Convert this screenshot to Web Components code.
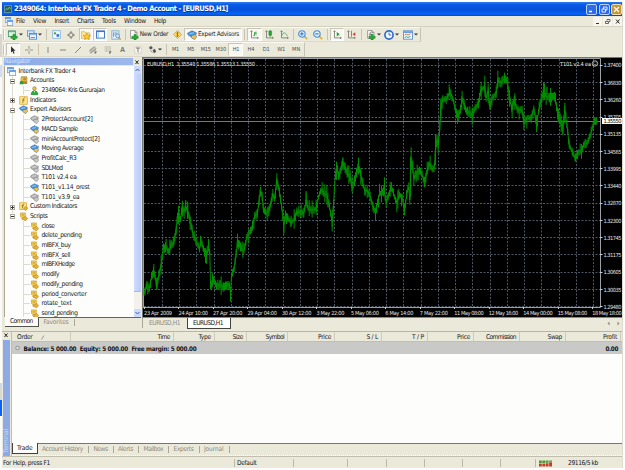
<!DOCTYPE html>
<html lang="en">
<head>
<meta charset="utf-8">
<title>Interbank FX Trader 4</title>
<style>
    body {
        margin: 0;
        width: 625px;
        height: 470px;
        overflow: hidden;
        background: #fdfdfd;
        font: 6.6px/9px "DejaVu Sans Condensed", "DejaVu Sans", sans-serif;
        color: #181818;
    }
</style>
</head>
<body>
<trader-app></trader-app>

<script>
// Small SVG drawings, all on a 12x12 grid
const chartAxes = '<path d="M2 1v9.500h9M.8 2.500L2 1l1.200 1.500M9.500 9.300l1.500 1.200-1.500 1.200" fill="none" stroke="#6c6c66"/>';
const sheet = '<path d="M2 .5h5l2.500 2.500v7H2z" fill="#fff" stroke="#888"/><path d="M7 .5V3h2.500" fill="none" stroke="#888"/>';
const plus = '<path d="M6 5h2.500v2.500H11V10H8.500v2H6v-2H3.500V7.500H6z" fill="#25ae30" stroke="#087519" stroke-width=".5"/>';
const scroll = '<path d="M2 1.200h6.500v6.500H4l-2-2z" fill="#f7cf55" stroke="#b98b1c" stroke-width=".7"/><path d="M3.500 8.500L9 6l2.500 2.500L9 11.500 4.500 10z" fill="#eab330" stroke="#a87617" stroke-width=".7"/><path d="M3.500 3.200h3.500M3.500 5h3.500" stroke="#c4952a" stroke-width=".8"/>';
const hat = (a, b, c) => `<path d="M.5 4L6 1l5.500 2.500-2 3.500L5 8 2 6.500z" fill="${a}" stroke="${b}" stroke-width=".7"/><path d="M5 6.500l5.500-1 1 3L9 11.500 5.500 9.500z" fill="${c}" stroke="${b}" stroke-width=".6"/><path d="M3 4.500l5-1" stroke="#fff" stroke-opacity=".6"/>`;

const ICONS = {
    app: '<rect x=".5" y="1" width="11" height="10" fill="#285d60" stroke="#8ca99e"/><path d="M2 8l2-3 2 2 2-4 2 3" fill="none" stroke="#8cdf91"/>',
    windows: '<rect x=".5" y=".5" width="8" height="7" fill="#d9ebff" stroke="#6f9ee0"/><path d="M.5 1.500h8" stroke="#5c92e4" stroke-width="2"/><rect x="3.500" y="4.500" width="8" height="7" fill="#f3f9ff" stroke="#6f9ee0"/><path d="M3.500 5.500h8" stroke="#5c92e4" stroke-width="2"/>',
    newChart: '<rect x=".5" y="1" width="8.500" height="7" fill="#dcf3e3" stroke="#4b9868"/><path d="M.5 2h8.500" stroke="#4b9868"/>' + plus,
    profiles: '<rect x=".5" y="1" width="8" height="6.500" fill="#d8eafd" stroke="#5990d5"/><rect x="3" y="4" width="8.500" height="7" fill="#eaf4ff" stroke="#4781cc"/><path d="M3 5h8.500M4.500 9h5" stroke="#4781cc"/>',
    market: '<rect x="1" y="1" width="10" height="10" fill="#f5fbff" stroke="#76a8d9"/><path d="M2.500 3.200h3v2.500h-3z" fill="#2fa444"/><path d="M6 5.500h3.500v3.500H6z" fill="#316fd0"/>',
    target: '<circle cx="6" cy="6" r="3.500" fill="none" stroke="#77756d" stroke-width="1.200"/><path d="M6 0v4.500M6 7.500V12M0 6h4.500M7.500 6H12" stroke="#77756d" stroke-width="1.300"/>',
    navigator: '<path d="M.5 2h4l1 1.500h5V10H.5z" fill="#fbe795" stroke="#c9a33b" stroke-width=".7"/><path d="M7 3.500l1.400 2.700 3 .4-2.200 2 .6 3-2.800-1.400-2.700 1.400.5-3-2.200-2 3-.4z" fill="#ffc933" stroke="#c98a12" stroke-width=".7"/>',
    terminal: '<rect x=".7" y="1.200" width="10.600" height="9.600" fill="#fff" stroke="#3c77c8" stroke-width="1.300"/><path d="M1 2h10" stroke="#3c77c8" stroke-width="1.500"/><path d="M3 3v8" stroke="#9cc3ef" stroke-width="1.500"/>',
    tester: '<rect x="1" y="1" width="8.500" height="10" fill="#e0eefa" stroke="#80a7cd"/><path d="M3 3v5M5 2.500v4M7 3v3" stroke="#668fb9"/><circle cx="8" cy="7" r="2.300" fill="#cde8fc" stroke="#678eb9"/><path d="M9.500 9l2 2.500" stroke="#c29a48" stroke-width="1.500"/>',
    order: sheet + plus,
    coin: '<path d="M6 .7L11.300 6 6 11.300.7 6z" fill="#ffda63" stroke="#d59b21"/><path d="M7.500 4c-3-1.500-3.500 1-1.500 1.800S7 9 4.300 7.800M6 2.800v6.400" fill="none" stroke="#92600e" stroke-width=".9"/>',
    expert: hat('#4c9ae2', '#2860a4', '#f1c04a'),
    expertOff: hat('#b3b3b3', '#767676', '#c8c8c8'),
    bars: chartAxes + '<path d="M6 3v5M6 4h2M8 2v5M4.500 7.500H6" stroke="#159127" fill="none"/>',
    candles: chartAxes + '<path d="M7 0v9" stroke="#0e7620"/><path d="M5.200 1.500h3.600V7H5.200z" fill="#20ad38" stroke="#0e7620" stroke-width=".6"/>',
    line: chartAxes + '<path d="M3 7c2-6 4-3 7 1" fill="none" stroke="#4f9568"/>',
    zoomIn: '<path d="M7 7l4 4" stroke="#deb23b" stroke-width="2.200"/><circle cx="4.700" cy="4.700" r="3.900" fill="#dff1ff" stroke="#438ad6" stroke-width="1.300"/><path d="M2.700 4.700h4M4.700 2.700v4" stroke="#2b65b3" stroke-width="1.200"/>',
    zoomOut: '<path d="M7 7l4 4" stroke="#deb23b" stroke-width="2.200"/><circle cx="4.700" cy="4.700" r="3.900" fill="#dff1ff" stroke="#438ad6" stroke-width="1.300"/><path d="M2.700 4.700h4" stroke="#2b65b3" stroke-width="1.200"/>',
    autoScroll: chartAxes + '<path d="M5 2.500L9 5.500 5 8.500z" fill="#1da633"/>',
    shift: chartAxes + '<path d="M6 1v8" stroke="#666"/><path d="M11 3L7.500 5.500 11 8z" fill="#d33b24"/>',
    indicators: sheet + '<path d="M6.500 2.500c-2-.5-1.500 2-2 5M3.500 5h3" fill="none" stroke="#777"/>' + plus,
    clock: '<circle cx="6" cy="6" r="4.900" fill="#f1f8ff" stroke="#2f6ccc" stroke-width="2"/><path d="M6 3v3h2.500" fill="none" stroke="#2b5aa8"/>',
    template: '<rect x=".5" y="1" width="11" height="10" fill="#eff7ff" stroke="#5089cc"/><path d="M.5 2.500h11" stroke="#5f98da" stroke-width="2"/><path d="M2 6l2-1 2 1 3-1.500" fill="none" stroke="#d95140"/><path d="M2 9l2-1 2 1 3-1.500" fill="none" stroke="#2ba03b"/>',
    cursor: '<path d="M3 .5v9.300l2.200-2L6.800 11.500l1.600-.8-1.600-3.400h3z" fill="#303030"/>',
    cross: '<path d="M6 0v4.800M6 7.200V12M0 6h4.800M7.200 6H12" stroke="#84827a" stroke-width="1.200"/>',
    vline: '<path d="M6 1.500v9" stroke="#77756e" stroke-width="1.200"/>',
    hline: '<path d="M1.500 6h9" stroke="#77756e" stroke-width="1.300"/>',
    trend: '<path d="M1.500 10.500l9-9" stroke="#77756e" stroke-width="1.300"/>',
    channel: '<path d="M0 8l8-7M2 11l9-7M3 4v7M6 2v7M9 1v6" fill="none" stroke="#77756e"/><path d="M9 8v4M9 8.500h2.500M9 10h2" stroke="#555" fill="none"/>',
    fibo: '<path d="M1 1.500h10M1 4.500h10M1 7.500h10" stroke="#8d8b81" stroke-dasharray="1.500 .5"/><path d="M8.500 8v4M8.500 8.500h2.500M8.500 10h2" stroke="#555" fill="none"/>',
    label: '<rect x="1" y="1" width="10" height="10" fill="#f8f6ee" stroke="#aaa89c" stroke-dasharray="1 1"/><path d="M3 3h6M6 3v6.500" stroke="#666" stroke-width="1.300"/>',
    arrows: '<path d="M1 4l3-3 2.500 3L4 6z" fill="#555"/><path d="M6 7l3-2 2 4-3 2z" fill="#555"/><path d="M3 7l3 3" stroke="#777"/>',
    accounts: '<path d="M3 1h7.500v9H3z" fill="#e8bd43" stroke="#8d7022" stroke-width=".8"/><circle cx="7.500" cy="4" r="2" fill="#c48a35"/><path d="M1 11V8l2-2 3 1v4z" fill="#24a034"/><circle cx="3" cy="4.800" r="1.600" fill="#e6c154"/><path d="M5 10c0-4 6-4 6 0z" fill="#a87f25"/>',
    user: '<path d="M1.500 11.500c0-7 9-7 9 0z" fill="#27af36" stroke="#0b751a" stroke-width=".7"/><circle cx="6" cy="3.300" r="2.400" fill="#e7bf51" stroke="#8b6b1d" stroke-width=".7"/><path d="M5 7l1 2 1-2" fill="#fff"/>',
    indicator: '<rect x="1" y="1" width="10" height="10" fill="#ffe588" stroke="#d3a533"/><path d="M8 2.500c-2.500-.5-2 2-3 7M4 5.500h3.500" fill="none" stroke="#8a650e"/>',
    custom: '<rect x="1" y="1" width="9" height="9" fill="#ffe588" stroke="#d3a533"/><path d="M7 2.500c-2-.5-2 2-2.500 6M3.500 5h3" fill="none" stroke="#8a650e"/><path d="M6 8l3-2 3 2-3 3.500z" fill="#efb12c" stroke="#a97a14" stroke-width=".6"/>',
    script: scroll,
    signal: '<path d="M0 1h2.600v5H0zM3.100 1h2.600v5H3.100zM6.200 1h2.600v3.500H6.200zM9.300 1h2.700v2H9.300z" fill="#4d9a32"/><path d="M0 7h2.600v4H0zM3.100 7h2.600v4H3.100zM6.200 5.500h2.600V11H6.200zM9.300 4h2.700v7H9.300z" fill="#c2402b"/>'
};

class PixelIcon extends HTMLElement {
    connectedCallback() {
        const shadow = this.attachShadow({ mode: 'open' });
        const w = this.getAttribute('w') || 10;
        const h = this.getAttribute('h') || w;
        shadow.innerHTML = `
            <style>:host { display: block; flex: none; } svg { display: block; }</style>
            <svg width="${w}" height="${h}" viewBox="0 0 12 12" preserveAspectRatio="none">${ICONS[this.getAttribute('name')]}</svg>
        `;
    }
}
customElements.define('pixel-icon', PixelIcon);

// Label that spreads its letters over the given width
class FitText extends HTMLElement {
    connectedCallback() {
        const shadow = this.attachShadow({ mode: 'open' });
        shadow.innerHTML = `
            <style>
                :host { display: block; flex: none; }
                span { display: block; width: max-content; white-space: pre; }
            </style>
            <span><slot></slot></span>
        `;
        const w = parseFloat(this.getAttribute('w'));
        const span = shadow.querySelector('span');
        const box = span.getBoundingClientRect();
        const natural = this.hasAttribute('vertical') ? box.height : box.width;
        const count = this.textContent.length;
        if (!this.hasAttribute('vertical')) this.style.width = w + 'px';
        span.style.letterSpacing = ((w - natural) / count) + 'px';
    }
}
customElements.define('fit-text', FitText);

class TitleBar extends HTMLElement {
    connectedCallback() {
        this.attachShadow({ mode: 'open' }).innerHTML = `
            <style>
                :host {
                    display: flex; align-items: center; height: 14px; box-sizing: border-box;
                    padding: 0 0 0 2px; color: #fff;
                    background: linear-gradient(#2f7fee, #0a5ae6 18%, #0450db 55%, #0665f8 85%, #0448c6);
                    font: bold 7.500px/12px "DejaVu Sans Condensed", "DejaVu Sans", sans-serif;
                }
                fit-text { margin-left: 2px; text-shadow: .5px .5px #08368e; }
                .buttons { display: flex; gap: 1.500px; margin-left: auto; }
                svg { display: block; box-sizing: border-box; border: 1px solid #b9d2ff; border-radius: 2px; background: #2e6be6; }
                .close { background: #c89430; border-color: #f0dfb5; }
            </style>
            <pixel-icon name="app" w="8"></pixel-icon>
            <fit-text w="214">2349064: Interbank FX Trader 4 - Demo Account - [EURUSD,H1]</fit-text>
            <div class="buttons">
                <svg width="11" height="11" viewBox="0 0 9 9"><path d="M2 6.500h3" stroke="#fff" stroke-width="1.500"/></svg>
                <svg width="11" height="11" viewBox="0 0 9 9"><path d="M3.500 4V2h3.500v3H5.500M2 4h3.500v3H2z" fill="none" stroke="#dfe9ff"/></svg>
                <svg class="close" width="11" height="11" viewBox="0 0 9 9"><path d="M2 2l5 5M7 2L2 7" stroke="#fff" stroke-width="1.300"/></svg>
            </div>
        `;
    }
}
customElements.define('title-bar', TitleBar);

class MenuBar extends HTMLElement {
    connectedCallback() {
        const items = [['File', 9, 8], ['View', 13, 8.5], ['Insert', 14.5, 8], ['Charts', 17, 8], ['Tools', 14, 8], ['Window', 22, 8], ['Help', 12, 0]];
        this.attachShadow({ mode: 'open' }).innerHTML = `
            <style>
                :host { display: flex; align-items: center; height: 11px; box-sizing: border-box; padding-left: 3px; border-bottom: 1px solid #d5d1c0; }
                pixel-icon { margin-right: 3px; }
                .mdi { margin-left: auto; display: flex; gap: 1px; }
                .mdi svg { display: block; background: #f7f5ec; }
            </style>
            <pixel-icon name="windows" w="8" h="9"></pixel-icon>
            ${items.map(([t, w, gap]) => `<fit-text w="${w}" style="margin-right:${gap}px">${t}</fit-text>`).join('')}
            <div class="mdi">
                <svg width="9" height="9"><path d="M3 6.500h3" stroke="#333"/></svg>
                <svg width="9" height="9"><path d="M4 3.500V2.500h3v2H6M2.500 4.500h3v2h-3z" fill="none" stroke="#444" stroke-width=".8"/></svg>
                <svg width="9" height="9"><path d="M3 2.500l3.500 4M6.500 2.500L3 6.500" stroke="#222"/></svg>
            </div>
        `;
    }
}
customElements.define('menu-bar', MenuBar);

// Toolbar cell: optional icon and caption, with attributes for the pressed state and the drop-down arrow
class ToolButton extends HTMLElement {
    connectedCallback() {
        const icon = this.getAttribute('icon');
        const size = this.getAttribute('size') || 10;
        this.attachShadow({ mode: 'open' }).innerHTML = `
            <style>
                :host { display: flex; flex: none; align-items: center; justify-content: center; height: 13px; box-sizing: border-box; gap: 1px; }
                :host([pressed]) { background: #f8f7f1; border: 1px solid; border-color: #c9c5b6 #fff #fff #c9c5b6; }
            </style>
            ${icon ? `<pixel-icon name="${icon}" w="${size}"></pixel-icon>` : ''}
            <slot></slot>
            ${this.hasAttribute('drop') ? '<svg width="4" height="3" style="flex:none"><path d="M0 .5h4L2 2.500z" fill="#333"/></svg>' : ''}
        `;
        this.style.width = this.getAttribute('w') + 'px';
    }
}
customElements.define('tool-button', ToolButton);

class ToolBar extends HTMLElement {
    connectedCallback() {
        this.attachShadow({ mode: 'open' }).innerHTML = `
            <style>
                :host { display: flex; align-items: center; height: 15px; box-sizing: border-box; width: max-content; border-right: 1px solid #c7c3b3; border-bottom: 1px solid #dedacb; border-top: 1px solid #f9f8f1; }
                .grip { width: 2px; height: 10px; margin: 0 1px; box-sizing: border-box; background: #c9c5b6; border-right: 1px solid #fff; }
                ::slotted(hr) { flex: none; width: 1px; height: 11px; margin: 0 2px; border: 0; background: #c9c3b0; }
            </style>
            <div class="grip"></div>
            <slot></slot>
        `;
    }
}
customElements.define('tool-bar', ToolBar);

class NavigatorTree extends HTMLElement {
    connectedCallback() {
        const rows = [
            [0, 'windows', 'Interbank FX Trader 4', 57],
            [1, 'accounts', 'Accounts', 24, '-'],
            [2, 'user', '2349064: Kris Gururajan', 63],
            [1, 'indicator', 'Indicators', 26, '+'],
            [1, 'expert', 'Expert Advisors', 41, '-'],
            [2, 'expertOff', '2ProtectAccount[2]', 51],
            [2, 'expert', 'MACD Sample', 36],
            [2, 'expertOff', 'miniAccountProtect[2]', 58],
            [2, 'expert', 'Moving Average', 42],
            [2, 'expertOff', 'ProfitCalc_R3', 35],
            [2, 'expertOff', 'SDLMod', 21],
            [2, 'expertOff', 'T101 v2.4 ea', 35],
            [2, 'expert', 'T101_v1.14_orest', 48],
            [2, 'expertOff', 'T101_v3.9_ea', 38],
            [1, 'custom', 'Custom Indicators', 47, '+'],
            [1, 'script', 'Scripts', 17.5, '-'],
            [2, 'script', 'close', 13],
            [2, 'script', 'delete_pending', 40],
            [2, 'script', 'mIBFX_buy', 29],
            [2, 'script', 'mIBFX_sell', 28.5],
            [2, 'script', 'mIBFXHedge', 33],
            [2, 'script', 'modify', 17.5],
            [2, 'script', 'modify_pending', 41],
            [2, 'script', 'period_converter', 45],
            [2, 'script', 'rotate_text', 30],
            [2, 'script', 'send_pending', 36]
        ];
        const left = [2, 13.5, 25];
        const html = rows.map(([level, icon, text, w, box]) => `
            <div class="row l${level}" style="padding-left:${left[level]}px">
                ${box ? `<i>${box === '+' ? '<b></b>' : ''}</i>` : ''}
                <pixel-icon name="${icon}" w="9"></pixel-icon>
                <fit-text w="${w}">${text}</fit-text>
            </div>`).join('');
        this.attachShadow({ mode: 'open' }).innerHTML = `
            <style>
                :host { display: flex; height: 251px; background: #fdfefc; border: solid #aaa797; border-width: 0 0 0 1px; box-sizing: border-box; overflow: hidden; }
                .list { flex: 1; overflow: hidden; position: relative; padding-top: .4px;
                    background: linear-gradient(#dedbd0, #dedbd0) 7px 8px / 1px 139px no-repeat; }
                .row { display: flex; align-items: center; height: 9.700px; gap: 2.500px; position: relative; }
                .l2 { background: linear-gradient(#dedbd0, #dedbd0) 18px 0 / 1px 100% no-repeat, linear-gradient(#dedbd0, #dedbd0) 18px 50% / 7px 1px no-repeat; }
                i { position: absolute; left: 4.500px; top: 2.500px; width: 5px; height: 5px; box-sizing: border-box; border: 1px solid #a9a799;
                    background: linear-gradient(#333, #333) center / 3px 1px no-repeat #fff; }
                b { position: absolute; left: 1px; top: 0; width: 1px; height: 3px; background: #333; }
                .scroll { display: flex; flex-direction: column; width: 7px; background: #f3f1ea; }
                .scroll svg { display: block; background: #cbdafd; }
                .thumb { height: 218px; background: linear-gradient(90deg, #cfdcfe, #b7cbf8); border-bottom: 1px solid #a4b9ed; box-sizing: border-box; }
                .gap { flex: 1; }
            </style>
            <div class="list">${html}</div>
            <div class="scroll">
                <svg width="7" height="8"><path d="M1.500 5l2-2 2 2" fill="none" stroke="#3f5b94"/></svg>
                <div class="thumb"></div>
                <div class="gap"></div>
                <svg width="7" height="8"><path d="M1.500 3l2 2 2-2" fill="none" stroke="#3f5b94"/></svg>
            </div>
        `;
    }
}
customElements.define('navigator-tree', NavigatorTree);

class NavigatorPanel extends HTMLElement {
    connectedCallback() {
        this.attachShadow({ mode: 'open' }).innerHTML = `
            <style>
                :host { display: block; width: 140px; flex: none; padding: 0 1.500px 0 2px; box-sizing: border-box; }
                .head { display: flex; justify-content: space-between; height: 9px; align-items: center; }
                .bar { flex: 1; height: 7px; background: linear-gradient(90deg, #8caae6, #9db8ec); color: #d7e4fd; display: flex; align-items: center; }
                .head svg { display: block; }
                .tabs { display: flex; height: 11px; align-items: flex-start; color: #8d8b80; border-top: 1px solid #66645d; margin-left: 1px; }
                .on { height: 9px; background: #fdfdfb; border: solid #55534d; border-width: 0 1px 1px 0; padding: 0 5px 0 5px; color: #222; margin-top: -1px; margin-right: 5px; }
                .sep { width: 1px; height: 7px; background: #aaa799; margin: 1px 0 0 5px; }
            </style>
            <div class="head">
                <div class="bar"><fit-text w="26">Navigator</fit-text></div>
                <svg width="8" height="8"><path d="M2.500 2.500l3 3.500M5.500 2.500l-3 3.500" stroke="#222"/></svg>
            </div>
            <navigator-tree></navigator-tree>
            <div class="tabs">
                <div class="on"><fit-text w="22.5">Common</fit-text></div>
                <fit-text w="25">Favorites</fit-text>
                <div class="sep"></div>
            </div>
        `;
    }
}
customElements.define('navigator-panel', NavigatorPanel);

class PriceChart extends HTMLElement {
    // Shape of the hourly series, in thirds of a pixel; y is counted from the middle of the plot
    static SERIES = [
        14,310, 22,285, 30,295, 36,262, 42,240, 47,262, 52,290, 58,255, 65,225, 72,168, 80,172, 88,188, 95,165, 103,160,
        110,120, 114,80, 118,75, 123,90, 128,50, 134,65, 138,48, 145,65, 152,90, 160,130, 172,158, 180,175, 185,155, 192,178,
        200,200, 207,175, 211,190, 213,285, 222,272, 232,285, 242,285, 252,292, 262,285, 270,285, 273,310, 276,258, 284,235,
        294,160, 304,172, 313,185, 322,140, 333,125, 340,105, 347,75, 354,70, 359,30, 363,0, 368,20, 372,62, 380,70,
        388,62, 395,35, 400,10, 405,25, 412,-30, 420,5, 427,55, 433,105, 438,75, 445,85, 455,100, 465,85, 472,68, 485,65,
        493,70, 500,30, 506,58, 518,60, 531,55, 537,20, 545,-2, 553,10, 562,15, 570,50, 578,95, 582,50, 585,-10, 589,-55,
        594,-60, 598,-40, 604,-60, 610,-85, 617,-65, 625,-48, 632,-38, 638,-5, 645,-30, 652,-50, 657,-75, 664,-45,
        670,-18, 677,5, 683,0, 692,20, 700,48, 708,68, 714,40, 720,10, 726,15, 734,0, 740,38, 747,15, 756,-10, 765,20,
        772,38, 780,15, 788,20, 795,65, 802,10, 808,-8, 811,30, 813,-60, 817,-85, 823,-35, 830,-48, 840,-60, 848,-45,
        856,-20, 863,-60, 869,-80, 878,-62, 884,-65, 888,-115, 892,-150, 897,-140, 901,-190, 905,-255, 910,-272, 920,-270,
        931,-295, 940,-275, 948,-240, 956,-222, 963,-240, 968,-275, 975,-250, 985,-235, 998,-225, 1010,-250, 1017,-260,
        1024,-300, 1036,-310, 1040,-275, 1046,-298, 1051,-250, 1060,-278, 1070,-290, 1075,-330, 1084,-322, 1095,-335,
        1102,-328, 1110,-285, 1117,-240, 1124,-270, 1133,-240, 1148,-240, 1153,-205, 1165,-215, 1175,-215, 1183,-245,
        1191,-200, 1199,-245, 1212,-295, 1220,-282, 1230,-278, 1245,-280, 1254,-235, 1262,-208, 1270,-182, 1276,-240,
        1282,-200, 1289,-135, 1300,-110, 1308,-95, 1316,-112, 1326,-118, 1334,-138, 1346,-145, 1355,-175, 1365,-205, 1374,-206
    ];

    // Single long bars: x, high, low
    static SPIKES = [
        43,222,262, 52,265,300, 129,32,80, 139,30,70, 201,180,222, 208,152,185, 273,290,335, 412,-50,0, 433,90,128,
        500,8,50, 578,60,110, 591,-85,-30, 610,-98,-60, 638,-40,8, 657,-97,-60, 795,40,76, 815,-128,-60, 813,-100,20,
        735,-38,10, 752,-25,20, 855,-40,-8, 888,-165,-75, 896,-165,-110, 904,-275,-220, 931,-308,-280, 956,-240,-205, 967,-282,-240,
        1000,-245,-212, 1025,-325,-270, 1036,-343,-280, 1046,-320,-260, 1052,-270,-240, 1075,-358,-310, 1095,-352,-320,
        1110,-300,-250, 1118,-265,-215, 1126,-290,-240, 1153,-230,-180, 1192,-225,-185, 1212,-306,-280,
        1262,-230,-190, 1270,-210,-165, 1276,-262,-200, 1308,-110,-85, 1326,-138,-105, 1369,-214,-195
    ];

    bars() {
        const s = PriceChart.SERIES;
        const k = PriceChart.SPIKES;
        let d = '';
        let seed = 7;
        const rnd = () => (seed = (seed * 16807) % 2147483647) / 2147483647;
        for (let i = 0; i < s.length - 2; i += 2) {
            for (let x = s[i]; x < s[i + 2]; x += 3) {
                const t = (x - s[i]) / (s[i + 2] - s[i]);
                const y = s[i + 1] + t * (s[i + 3] - s[i + 1]);
                const wild = rnd() > .8 ? 14 : 0;
                const up = 5 + rnd() * 11 + (rnd() > .5 ? wild : 0);
                const down = 5 + rnd() * 11 + (rnd() > .5 ? wild : 0);
                d += `M${x} ${(y - up).toFixed(1)}V${(y + down).toFixed(1)}`;
            }
            d += `M${s[i]} ${s[i + 1]}L${s[i + 2]} ${s[i + 3]}`;
        }
        for (let i = 0; i < k.length; i += 3) d += `M${k[i]} ${k[i + 1]}V${k[i + 2]}`;
        return d;
    }

    connectedCallback() {
        const prices = ['1.37400', '1.36830', '1.36260', '1.35705', '1.35135', '1.34565', '1.33995', '1.33440', '1.32870', '1.32300', '1.31745', '1.31175', '1.30605', '1.30035', '1.29480'];
        const dates = ['23 Apr 2009', '24 Apr 10:00', '27 Apr 20:00', '29 Apr 04:00', '30 Apr 12:00', '3 May 22:00', '5 May 06:00', '6 May 14:00', '7 May 22:00', '11 May 08:00', '12 May 16:00', '14 May 00:00', '15 May 08:00', '18 May 18:00'];
        let grid = '';
        for (let i = 0; i < 26; i++) grid += `M${Math.floor(20.300 + i * 17.250) + .5} 2V250`;
        for (let i = 0; i < 15; i++) grid += `M2 ${Math.floor(8.300 + i * 17.240) + .5}H458`;
        const priceText = prices.map((p, i) => `
            <path d="M458 ${Math.floor(8.300 + i * 17.240) + .5}h2.500" stroke="#ccc"/>
            <text x="461.500" y="${10.400 + i * 17.240}" textLength="18">${p}</text>`).join('');
        const dateText = dates.map((d, i) => `
            <path d="M${Math.floor(2.300 + i * 34.480) + .5} 250v2" stroke="#ccc"/>
            <text x="${2 + i * 34.480}" y="257.500" textLength="${d.length > 11 ? 29.5 : 28}">${d}</text>`).join('');
        this.attachShadow({ mode: 'open' }).innerHTML = `
            <style>
                :host { display: block; height: 261px; background: #000; }
                svg { display: block; }
                text { font: 5.600px "DejaVu Sans Condensed", "DejaVu Sans", sans-serif; fill: #e3e3e3; }
            </style>
            <svg width="480" height="261">
                <path d="M0 .5H480" stroke="#77756d"/>
                <path d="M.5 0V261" stroke="#77756d"/>
                <path d="M1.500 251V1.500H458.500V250.500H1.500" fill="none" stroke="#9ba1a6"/>
                <path d="${grid}" fill="none" stroke="#4c5964" stroke-dasharray="2 1.500"/>
                <path d="M2 64.500H458" stroke="#6f7886"/>
                <g transform="translate(-2.500 133) scale(.33333)"><path d="${this.bars()}" fill="none" stroke="#009000" stroke-width="3"/></g>
                ${priceText}
                <rect x="460" y="61" width="20" height="6" fill="#fff"/>
                <text x="461.500" y="66" textLength="18" style="fill:#000">1.35550</text>
                ${dateText}
                <text x="5" y="9" textLength="108" xml:space="preserve">EURUSD,H1  1.35548 1.35586 1.35513 1.35550</text>
                <text x="418" y="9" textLength="31">T101 v2.4 ea</text>
                <circle cx="453" cy="6.500" r="2.700" fill="none" stroke="#ddd" stroke-width=".8"/>
                <path d="M451.500 7q1.500 2 3 0M452 5.500v.6M454 5.500v.6" fill="none" stroke="#ddd" stroke-width=".6"/>
                <path d="M0 260.500H480" stroke="#8b8790"/>
            </svg>
        `;
    }
}
customElements.define('price-chart', PriceChart);

class ChartPane extends HTMLElement {
    connectedCallback() {
        this.attachShadow({ mode: 'open' }).innerHTML = `
            <style>
                :host { display: block; width: 480px; overflow: hidden; }
                .tabs { display: flex; height: 11px; align-items: flex-start; border-bottom: 1px dotted #fff; }
                .off { color: #8d8b80; padding: 1px 7px 0 6px; border-left: 1px solid #aaa797; height: 9px; }
                .on { background: #fdfdfb; border: 1px solid #44423d; border-top: 0; padding: 1px 7px 0 5px; height: 9px; }
                .tabs svg { margin-left: auto; }
            </style>
            <price-chart></price-chart>
            <div class="tabs">
                <div class="off"><fit-text w="31">EURUSD,H1</fit-text></div>
                <div class="on"><fit-text w="30">EURUSD,H1</fit-text></div>
                <svg width="18" height="10"><path d="M5.500 3.500v4l-2-2zM13.500 3.500v4l2-2z" fill="#8d8b80"/></svg>
            </div>
        `;
    }
}
customElements.define('chart-pane', ChartPane);

class TerminalPanel extends HTMLElement {
    connectedCallback() {
        const cols = [['Time', 103, 12.5], ['Type', 41, 12.5], ['Size', 32, 10.5], ['Symbol', 41, 18.5], ['Price', 47, 13], ['S / L', 47, 11.5], ['T / P', 46, 12], ['Price', 46, 13], ['Commission', 46, 30], ['Swap', 46, 14.5], ['Profit', 55, 14]];
        const tabs = [['Account History', 41], ['News', 14], ['Alerts', 15], ['Mailbox', 19.5], ['Experts', 20], ['Journal', 19.5]];
        this.attachShadow({ mode: 'open' }).innerHTML = `
            <style>
                :host { display: flex; height: 125px; border-top: 1px solid #bab6a4; box-sizing: border-box; }
                .side { width: 9px; flex: none; display: flex; flex-direction: column; padding-left: 1px; box-sizing: border-box; }
                .side svg { display: block; }
                .strip { flex: 1; width: 7px; box-sizing: border-box; background: #8daae5; color: #c9d9f9; display: flex; align-items: flex-end; justify-content: center; padding-bottom: 3px; }
                .strip fit-text { writing-mode: vertical-rl; transform: rotate(180deg); }
                .main { flex: 1; border-left: 1px solid #c9b9b2; }
                .cols { display: flex; height: 10px; border-bottom: 1px solid #c3bfae; box-sizing: border-box; }
                .cols div { flex: none; display: flex; justify-content: flex-end; align-items: center; box-sizing: border-box; padding: 2px 3px 0 0; border-right: 1px solid #d0ccbc; }
                .cols .order { justify-content: flex-start; padding-left: 5px; width: 59px; gap: 8px; color: #222; }
                .balance { display: flex; align-items: center; height: 12px; background: #c9c9c8; font-weight: bold; padding: 0 4px 0 3px; color: #111; font-size: 6.300px; }
                .balance svg { margin-right: 3.500px; }
                .balance .sum { margin-left: auto; }
                .body { height: 89px; background: #fdfefc; border-bottom: 1px solid #77766f; }
                .tabs { display: flex; height: 11px; color: #8d8b80; border-bottom: 1px dotted #fff; }
                .on { background: #fdfdfb; height: 9px; border: solid #44423d; border-width: 0 1px 1px; color: #222; padding: 1px 4px 0; margin: -1px 4.500px 0 0; }
                .tab { display: flex; align-items: center; height: 10px; }
                .tab::after { content: ""; width: 1px; height: 7px; background: #aaa799; margin: 0 4.500px 0 5px; }
            </style>
            <div class="side">
                <svg width="7" height="8"><path d="M1.500 1.500l3 3.500M4.500 1.500l-3 3.500" stroke="#222"/></svg>
                <div class="strip"><fit-text vertical w="24">Terminal</fit-text></div>
            </div>
            <div class="main">
                <div class="cols">
                    <div class="order"><fit-text w="15.5">Order</fit-text><svg width="4" height="5"><path d="M.5 4.500l2.500-4" stroke="#999"/></svg></div>
                    ${cols.map(([t, w, tw]) => `<div style="width:${w}px"><fit-text w="${tw}">${t}</fit-text></div>`).join('')}
                </div>
                <div class="balance">
                    <svg width="5" height="6"><circle cx="2.500" cy="3" r="1.800" fill="#ddd" stroke="#888" stroke-width=".8"/></svg>
                    <fit-text w="173">Balance: 5 000.00  Equity: 5 000.00  Free margin: 5 000.00</fit-text>
                    <fit-text class="sum" w="12.5">0.00</fit-text>
                </div>
                <div class="body"></div>
                <div class="tabs">
                    <div class="on"><fit-text w="15.5">Trade</fit-text></div>
                    ${tabs.map(([t, w]) => `<div class="tab"><fit-text w="${w}">${t}</fit-text></div>`).join('')}
                </div>
            </div>
        `;
    }
}
customElements.define('terminal-panel', TerminalPanel);

class StatusBar extends HTMLElement {
    connectedCallback() {
        this.attachShadow({ mode: 'open' }).innerHTML = `
            <style>
                :host { display: flex; align-items: center; height: 12px; box-sizing: border-box; border-top: 1px solid #c3bfae; padding: 1px 0 0 1px; }
                div { flex: none; display: flex; align-items: center; box-sizing: border-box; height: 8px; border-right: 1px solid #bdb9a9; padding-left: 2px; }
                .help { padding-left: 0; }
                pixel-icon { margin: 0 16px 0 3px; }
            </style>
            <div class="help" style="width:232px"><fit-text w="47">For Help, press F1</fit-text></div>
            <div style="width:59px"><fit-text w="19.5">Default</fit-text></div>
            <div style="width:54px"></div>
            <div style="width:39px"></div>
            <div style="width:38px"></div>
            <div style="width:38px"></div>
            <div style="width:38px"></div>
            <div style="width:35px"></div>
            <pixel-icon name="signal" w="13" h="7"></pixel-icon>
            <fit-text w="30">29116/5 kb</fit-text>
        `;
    }
}
customElements.define('status-bar', StatusBar);

class TraderApp extends HTMLElement {
    connectedCallback() {
        const draw = ['vline', 'hline', 'trend', 'channel', 'fibo'];
        const periods = [['M1', 7], ['M5', 7], ['M15', 10], ['M30', 10.5], ['H1', 6.5], ['H4', 7], ['D1', 6.5], ['W1', 8], ['MN', 8.5]];
        this.attachShadow({ mode: 'open' }).innerHTML = `
            <style>
                :host { display: flex; width: 625px; height: 470px; }
                .behind { width: 2px; flex: none; display: flex; flex-direction: column; background: #fafafa; }
                .window { width: 620px; height: 466px; margin-top: 2px; background: #ebe9da; border-right: 1px solid #dedbd0; }
                .work { display: flex; height: 272px; }
                .gap { height: 2px; }
                .period { font-size: 5.600px; color: #4f4e49; }
                .a { font: bold 7px/9px "Liberation Sans", sans-serif; color: #77756e; }
                .cap { color: #222; font-size: 6.400px; }
            </style>
            <div class="behind">
                <span style="height:34px"></span>
                <span style="height:23px;background:#d8d6cf"></span>
                <span style="height:8px"></span>
                <span style="height:12px;background:#cfdcf3"></span>
                <span style="height:306px"></span>
                <span style="height:5px;background:#c8d8ee"></span>
                <span style="height:12px;background:#dad8cf"></span>
                <span style="height:16px;background:#0b62f0"></span>
            </div>
            <div class="window">
                <title-bar></title-bar>
                <menu-bar></menu-bar>
                <tool-bar>
                    <tool-button w="19" icon="newChart" drop></tool-button>
                    <tool-button w="19" icon="profiles" drop></tool-button>
                    <hr>
                    <tool-button w="14" icon="market" size="9"></tool-button>
                    <tool-button w="16" icon="target" size="8"></tool-button>
                    <tool-button w="14" icon="navigator" pressed></tool-button>
                    <tool-button w="14" icon="terminal" size="9" pressed></tool-button>
                    <tool-button w="17" icon="tester"></tool-button>
                    <hr style="margin:0 1px">
                    <tool-button w="43" icon="order"><fit-text class="cap" w="28.5">New Order</fit-text></tool-button>
                    <tool-button w="14" icon="coin" size="9"></tool-button>
                    <tool-button w="58" icon="expert" pressed><fit-text class="cap" w="41">Expert Advisors</fit-text></tool-button>
                    <hr>
                    <tool-button w="15" icon="bars" size="9" pressed></tool-button>
                    <tool-button w="15" icon="candles" size="9"></tool-button>
                    <tool-button w="15" icon="line" size="9"></tool-button>
                    <hr style="margin:0 1px">
                    <tool-button w="15" icon="zoomIn"></tool-button>
                    <tool-button w="15" icon="zoomOut"></tool-button>
                    <hr>
                    <tool-button w="14" icon="autoScroll" size="9" pressed></tool-button>
                    <tool-button w="15" icon="shift" size="9"></tool-button>
                    <hr>
                    <tool-button w="18" icon="indicators" drop></tool-button>
                    <tool-button w="19" icon="clock" drop></tool-button>
                    <tool-button w="19" icon="template" drop></tool-button>
                </tool-bar>
                <tool-bar>
                    <tool-button w="14" icon="cursor" size="8" pressed></tool-button>
                    <tool-button w="17" icon="cross" size="8"></tool-button>
                    <hr style="margin:0 1px">
                    ${draw.map(d => `<tool-button w="15" icon="${d}" size="8"></tool-button>`).join('')}
                    <tool-button w="15" class="a">A</tool-button>
                    <tool-button w="15" icon="label" size="8"></tool-button>
                    <tool-button w="19" icon="arrows" size="9" drop></tool-button>
                    <hr style="margin:0 1px 0 2px">
                    ${periods.map(([p, w]) => `<tool-button w="15.1" class="period" ${p === 'H1' ? 'pressed' : ''}><fit-text w="${w}">${p}</fit-text></tool-button>`).join('')}
                </tool-bar>
                <div class="work">
                    <navigator-panel></navigator-panel>
                    <chart-pane></chart-pane>
                </div>
                <div class="gap"></div>
                <terminal-panel></terminal-panel>
                <status-bar></status-bar>
            </div>
        `;
    }
}
customElements.define('trader-app', TraderApp);
</script>
</body>
</html>
